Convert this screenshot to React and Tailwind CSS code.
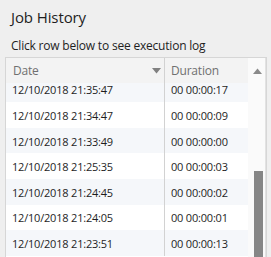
import React from "react";

const rows = [
  ["12/10/2018 21:35:47", "00 00:00:17"],
  ["12/10/2018 21:34:47", "00 00:00:09"],
  ["12/10/2018 21:33:49", "00 00:00:00"],
  ["12/10/2018 21:25:35", "00 00:00:03"],
  ["12/10/2018 21:24:45", "00 00:00:02"],
  ["12/10/2018 21:24:05", "00 00:00:01"],
  ["12/10/2018 21:23:51", "00 00:00:13"],
];

export default function App() {
  return (
    <div className="w-[271px] h-[257px] overflow-hidden bg-[#efefef] text-[#1e1e1e] flex flex-col" style={{ fontFamily: '"Open Sans", "Noto Sans", sans-serif' }}>
      <div className="pl-[11px] pt-[7px] h-[38px] text-[15px] leading-[20px] text-[#1e1e1e] tracking-[-0.1px]">Job History</div>
      <div className="pl-[11px] h-[19px] text-[12px] leading-[16px] tracking-[-0.2px]">Click row below to see execution log</div>
      <div className="ml-[5px] w-[262px] flex-1 border border-[#d6d6d6] border-b-0 flex overflow-hidden">
        <div className="w-[242px] flex flex-col">
          <div className="h-[25px] shrink-0 flex bg-[#f3f3f3] text-[12px] text-[#707070] tracking-[-0.2px]">
            <div className="w-[159px] flex items-center justify-between pl-[7px] pr-[3px] border-r border-[#d2d2d2]">
              <span>Date</span>
              <svg width="9" height="6" viewBox="0 0 9 6"><path d="M0 0H9L4.5 5.5Z" fill="#808080" /></svg>
            </div>
            <div className="flex-1 flex items-center pl-[6px]">Duration</div>
          </div>
          <div className="flex-1 overflow-hidden bg-white">
            <div className="-mt-[6.6px] flex flex-col">
              {rows.map((r, i) => (
                <div key={i} className={`h-[25.65px] shrink-0 flex items-center text-[11px] leading-[13px] tracking-[-0.2px] text-[#1e1e1e] ${i % 2 === 0 ? "bg-[#f5f7fa]" : "bg-white"}`}>
                  <div className="w-[159px] h-full flex items-center pl-[6px] pt-[1px] border-r border-[#d2d2d2]">{r[0]}</div>
                  <div className="flex-1 pl-[6px] pt-[1px]">{r[1]}</div>
                </div>
              ))}
            </div>
          </div>
        </div>
        <div className="w-[18px] flex flex-col bg-[#fafafa] border-r border-[#e2e2e2]">
          <div className="h-[25px] shrink-0 flex items-center justify-center pl-[1px]">
            <svg width="9" height="6" viewBox="0 0 9 6"><path d="M0 6H9L4.5 0.5Z" fill="#8a8a8a" /></svg>
          </div>
          <div className="h-[88px] shrink-0" />
          <div className="ml-[6px] w-[9px] flex-1 bg-[#868686]" />
        </div>
      </div>
    </div>
  );
}
